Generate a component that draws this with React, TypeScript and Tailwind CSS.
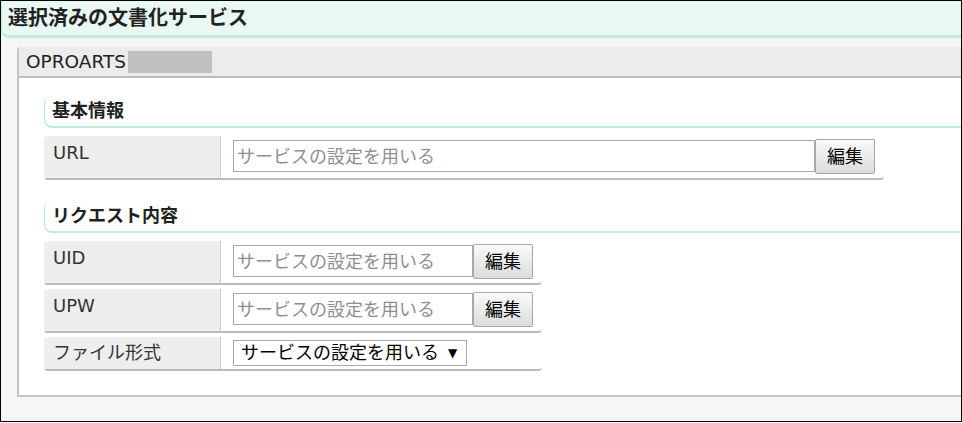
const font = "font-['DejaVu_Sans','Noto_Sans_CJK_JP',sans-serif]";

function Section({ title, mt }: { title: string; mt: string }) {
  return (
    <div
      className={`${mt} flex h-[32px] w-[1000px] items-center rounded-l-[8px] border-b-2 border-l border-[#bdeedd] pl-[7px] text-[18px] font-bold leading-[24px] text-[#222]`}
    >
      {title}
    </div>
  );
}

function TextRow({
  label,
  inputW,
  mt = "mt-[8px]",
}: {
  label: string;
  inputW: string;
  mt?: string;
}) {
  return (
    <div className={`${mt} flex w-fit rounded-b-[4px] border-b-2 border-[#bbbbbb]`}>
      <div className="h-[42px] w-[177px] rounded-tl-[4px] border-r border-[#cccccc] bg-[#eeeeee] pl-[9px] pt-[4px] text-[18px] leading-[26px] text-[#333]">
        {label}
      </div>
      <div className="flex items-start pl-[12px] pr-[9px] pt-[4px]">
        <input
          readOnly
          placeholder="サービスの設定を用いる"
          className={`${inputW} h-[32px] border border-[#aaaaaa] bg-white pl-[3px] text-[18px] leading-[24px] outline-none placeholder:text-[#8f8f8f]`}
        />
        <button className="-mt-px h-[35px] w-[60px] rounded-[2px] border border-[#a6a6a6] bg-gradient-to-b from-[#fafafa] to-[#dcdcdc] text-[18px] leading-[24px] text-black">
          編集
        </button>
      </div>
    </div>
  );
}

export default function App() {
  return (
    <div className={`h-[423px] w-[962px] bg-white ${font}`}>
      <div className="flex h-[422px] flex-col overflow-hidden border border-black bg-[#f6f6f6]">
        <div className="flex h-[37px] shrink-0 items-center rounded-bl-[8px] border-b-[3px] border-l border-[#bdeedd] bg-[#e8f8f2] pl-[6px] text-[20px] font-bold leading-[26px] text-[#222]">
          選択済みの文書化サービス
        </div>

        <div className="ml-[16px] mt-[9px] w-[1000px] shrink-0 rounded-tl-[4px] border-b-2 border-l-2 border-[#c4c4c4]">
          <div className="flex h-[31px] items-center rounded-tl-[4px] border-b-2 border-[#bbbbbb] bg-[#ececec] pl-[7px] text-[18.5px] leading-[24px] text-[#222]">
            <span>OPROARTS</span>
            <span className="ml-[2px] h-[22px] w-[84px] bg-[#c0c0c0]" />
          </div>

          <div className="h-[317px] bg-white pl-[25px] pt-[18px]">
            <Section title="基本情報" mt="mt-0" />
            <TextRow label="URL" inputW="w-[582px]" />

            <Section title="リクエスト内容" mt="mt-[21px]" />
            <TextRow label="UID" inputW="w-[240px]" />
            <TextRow label="UPW" inputW="w-[240px]" mt="mt-[4px]" />

            <div className="mt-[4px] flex w-[498px] rounded-b-[4px] border-b-2 border-[#bbbbbb]">
              <div className="h-[32px] w-[177px] rounded-tl-[4px] border-r border-[#cccccc] bg-[#eeeeee] pl-[9px] pt-[3px] text-[18px] leading-[26px] text-[#333]">
                ファイル形式
              </div>
              <div className="pl-[12px] pt-[3px]">
                <div className="flex h-[26px] w-[234px] items-center border border-[#aaaaaa] bg-white pl-[7px] text-[18px] leading-[24px] text-black">
                  <span>サービスの設定を用いる</span>
                  <span className="ml-[9px] text-[12px]">▼</span>
                </div>
              </div>
            </div>
          </div>
        </div>
      </div>
    </div>
  );
}
